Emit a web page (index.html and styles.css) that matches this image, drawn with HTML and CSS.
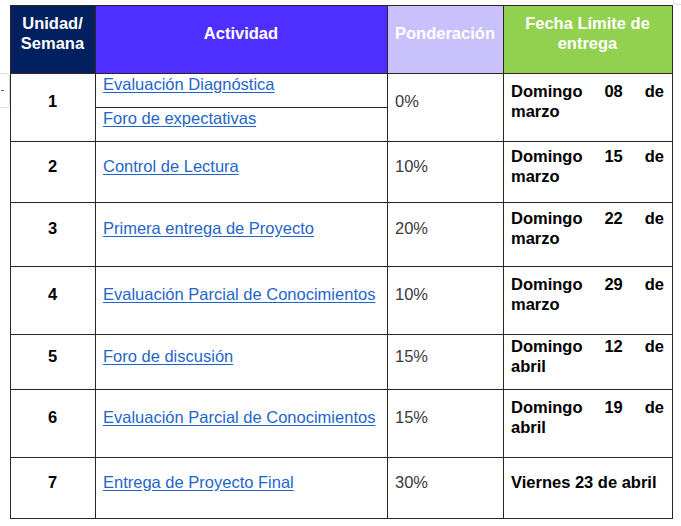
FILE: index.html
```html
<!DOCTYPE html>
<html lang="es">
<head>
<meta charset="utf-8">
<title>Cronograma</title>
<link rel="stylesheet" href="styles.css">
</head>
<body>
<div class="page">
  <div class="row-handle"><span class="dash"></span></div>
  <div class="corner-handle"></div>
  <table class="schedule">
    <colgroup>
      <col class="c-unit">
      <col class="c-act">
      <col class="c-pond">
      <col class="c-date">
    </colgroup>
    <thead>
      <tr class="h-head">
        <th class="th-unit">Unidad/ Semana</th>
        <th class="th-act">Actividad</th>
        <th class="th-pond">Ponderación</th>
        <th class="th-date">Fecha Límite de entrega</th>
      </tr>
    </thead>
    <tbody>
      <tr class="h-half">
        <td class="num" rowspan="2">1</td>
        <td class="act"><a href="#">Evaluación Diagnóstica</a></td>
        <td class="pct" rowspan="2">0%</td>
        <td class="date" rowspan="2">Domingo 08 de marzo</td>
      </tr>
      <tr class="h-half">
        <td class="act"><a href="#">Foro de expectativas</a></td>
      </tr>
      <tr class="h-61">
        <td class="num">2</td>
        <td class="act"><a href="#">Control de Lectura</a></td>
        <td class="pct">10%</td>
        <td class="date">Domingo 15 de marzo</td>
      </tr>
      <tr class="h-64">
        <td class="num">3</td>
        <td class="act"><a href="#">Primera entrega de Proyecto</a></td>
        <td class="pct">20%</td>
        <td class="date">Domingo 22 de marzo</td>
      </tr>
      <tr class="h-68">
        <td class="num">4</td>
        <td class="act"><a href="#">Evaluación Parcial de Conocimientos</a></td>
        <td class="pct">10%</td>
        <td class="date">Domingo 29 de marzo</td>
      </tr>
      <tr class="h-55">
        <td class="num">5</td>
        <td class="act"><a href="#">Foro de discusión</a></td>
        <td class="pct">15%</td>
        <td class="date">Domingo 12 de abril</td>
      </tr>
      <tr class="h-68">
        <td class="num">6</td>
        <td class="act"><a href="#">Evaluación Parcial de Conocimientos</a></td>
        <td class="pct">15%</td>
        <td class="date">Domingo 19 de abril</td>
      </tr>
      <tr class="h-61">
        <td class="num">7</td>
        <td class="act"><a href="#">Entrega de Proyecto Final</a></td>
        <td class="pct">30%</td>
        <td class="date">Viernes 23 de abril</td>
      </tr>
    </tbody>
  </table>
</div>
</body>
</html>
```

FILE: styles.css
```css
html, body {
  margin: 0;
  padding: 0;
  background: #ffffff;
}

.page {
  position: relative;
  padding: 5px 0 0 10px;
  font-family: "Liberation Sans", Arial, sans-serif;
  font-size: 16.5px;
  line-height: 20px;
}

.schedule {
  border-collapse: collapse;
  table-layout: fixed;
  width: 662px;
}

.c-unit { width: 85px; }
.c-act { width: 292px; }
.c-pond { width: 116px; }
.c-date { width: 169px; }

.schedule th,
.schedule td {
  border: 1px solid #33231f;
  padding: 0 8px 13px 7px;
  vertical-align: middle;
}

.schedule th {
  color: #ffffff;
  font-weight: bold;
  text-align: center;
}

.th-unit { background: #002060; }
.th-act { background: #4f2fff; }
.th-pond { background: #c9c1fb; white-space: nowrap; padding-left: 4px; padding-right: 4px; }
.th-date { background: #92d050; }

.h-head { height: 68px; }
.h-half { height: 34px; }
.h-61 { height: 61px; }
.h-64 { height: 64px; }
.h-68 { height: 68px; }
.h-55 { height: 55px; }

.num {
  text-align: center;
  font-weight: bold;
  color: #000000;
}

.act a {
  color: #1f66c8;
  text-decoration: underline;
  text-underline-offset: 2px;
}

.pct {
  color: #3a3a3a;
}

.date {
  font-weight: bold;
  color: #000000;
  text-align: justify;
}

.row-handle {
  position: absolute;
  left: -6px;
  top: 73px;
  width: 14px;
  height: 33px;
  border: 1px solid #dadce0;
  border-radius: 4px;
  background: #ffffff;
}

.row-handle .dash {
  position: absolute;
  left: 6px;
  top: 16px;
  width: 3px;
  height: 1px;
  background: #5f6368;
}

.corner-handle {
  position: absolute;
  left: 673px;
  top: -6px;
  width: 14px;
  height: 9px;
  border: 1px solid #dadce0;
  border-radius: 4px;
  background: #ffffff;
}
```
